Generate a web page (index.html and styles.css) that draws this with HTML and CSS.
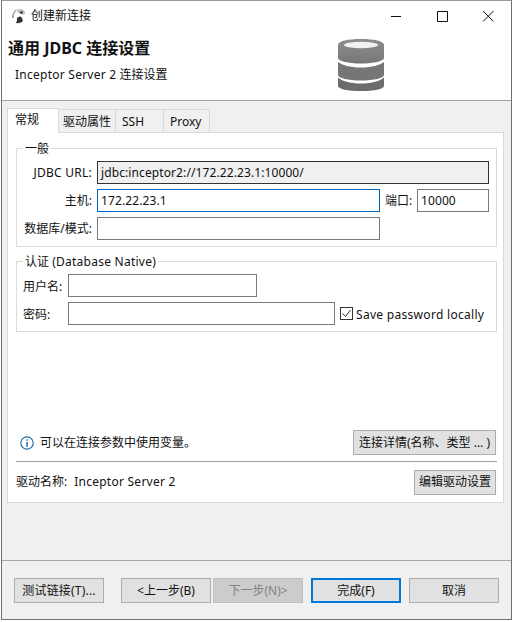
FILE: index.html
```html
<!DOCTYPE html>
<html lang="zh-CN">
<head>
  <meta charset="UTF-8" />
  <title>创建新连接</title>
  <link rel="stylesheet" href="styles.css">
</head>
<body>
  <div class="window">
    <!-- Title bar -->
    <div class="titlebar">
      <svg class="app-icon" viewBox="0 0 15 16">
        <path d="M1 10C1 6 3 3 6 1L5 3C3 5 2.500 7 2.500 10Z" fill="#888"/>
        <path d="M6 2C9 0 13 1 14 4C14.500 6 13 7 12 6.500C10 6 8 6 6 4Z" fill="#c4c4c4"/>
        <path d="M6 10C8 8 10 8 11 10L12 13C10 15 7 15.500 5 15C6 13.500 6 12 6 10Z" fill="#333"/>
        <circle cx="10.500" cy="4.500" r="1.300" fill="#333"/>
      </svg>
      <span class="title-text">创建新连接</span>
      <div class="win-controls">
        <svg class="win-btn" viewBox="0 0 46 20"><path d="M18 10.500H28" stroke="#111" fill="none"/></svg>
        <svg class="win-btn" viewBox="0 0 46 20"><path d="M18.500 5.500H28.500V15.500H18.500Z" stroke="#111" fill="none"/></svg>
        <svg class="win-btn" viewBox="0 0 46 20"><path d="M18 5L28.500 15.500M28.500 5L18 15.500" stroke="#111" fill="none"/></svg>
      </div>
    </div>

    <!-- Wizard header -->
    <div class="header">
      <div class="header-text">
        <h1>通用 JDBC 连接设置</h1>
        <p><span class="latin">Inceptor Server 2</span> 连接设置</p>
      </div>
      <svg class="db-icon" viewBox="0 0 46 52">
        <defs>
          <linearGradient id="dbGrad" x1="0" y1="0" x2="0" y2="1">
            <stop offset="0" stop-color="#8e8e8e"/>
            <stop offset="1" stop-color="#777"/>
          </linearGradient>
        </defs>
        <path fill="url(#dbGrad)" d="M0 6C0 2 10 0 23 0S46 2 46 6V19C46 22 36 24.500 23 24.500S0 22 0 19Z"/>
        <ellipse cx="23" cy="6" rx="17" ry="3.200" fill="#f2f2f2"/>
        <path fill="#767676" d="M0 23C4 26 12 28.500 23 28.500S42 26 46 23V36C46 39 36 41.500 23 41.500S0 39 0 36Z"/>
        <path fill="#6c6c6c" d="M0 38.500C4 42 12 44.500 23 44.500S42 42 46 38.500V47C46 50 36 52 23 52S0 50 0 47Z"/>
      </svg>
    </div>

    <!-- Tabs and form -->
    <div class="content">
      <div class="tabs">
        <div class="tab tab-active">常规</div>
        <div class="tab tab-driver">驱动属性</div>
        <div class="tab tab-ssh">SSH</div>
        <div class="tab tab-proxy">Proxy</div>
      </div>
      <div class="panel">
        <fieldset class="group group-general">
          <legend>一般</legend>
          <div class="general-grid">
            <label class="latin">JDBC URL:</label>
            <div class="field field-readonly field-wide">jdbc:inceptor2://172.22.23.1:10000/</div>
            <label>主机:</label>
            <div class="field field-focus">172.22.23.1</div>
            <label class="port-label">端口:</label>
            <div class="field">10000</div>
            <label>数据库/模式:</label>
            <div class="field"></div>
          </div>
        </fieldset>

        <fieldset class="group group-auth">
          <legend>认证 <span class="latin">(Database Native)</span></legend>
          <div class="auth-row">
            <label class="auth-label">用户名:</label>
            <div class="field field-user"></div>
          </div>
          <div class="auth-row">
            <label class="auth-label">密码:</label>
            <div class="field field-pass"></div>
            <span class="checkbox">
              <svg viewBox="0 0 11 11"><path d="M1.500 5.500L4.500 8.500L9.500 2" stroke="#333" fill="none"/></svg>
            </span>
            <span class="check-text latin">Save password locally</span>
          </div>
        </fieldset>

        <div class="info-row">
          <svg class="info-icon" viewBox="0 0 14 14">
            <circle cx="7" cy="7" r="6.200" fill="none" stroke="#1f6fae" stroke-width="1.200"/>
            <rect x="6.300" y="6" width="1.500" height="4.800" fill="#1f6fae"/>
            <rect x="6.300" y="3.300" width="1.500" height="1.500" fill="#1f6fae"/>
          </svg>
          <span class="info-text">可以在连接参数中使用变量。</span>
          <button class="btn btn-details">连接详情(名称、类型 ... )</button>
        </div>
        <div class="driver-row">
          <span class="driver-label">驱动名称:</span>
          <span class="driver-name latin">Inceptor Server 2</span>
          <button class="btn btn-driver">编辑驱动设置</button>
        </div>
      </div>
    </div>

    <!-- Bottom buttons -->
    <div class="footer">
      <button class="btn btn-main btn-test">测试链接(T)...</button>
      <button class="btn btn-main">&lt;上一步(B)</button>
      <button class="btn btn-main btn-disabled">下一步(N)&gt;</button>
      <button class="btn btn-main btn-default">完成(F)</button>
      <button class="btn btn-main">取消</button>
    </div>
  </div>
</body>
</html>
```
FILE: styles.css
```css
/* Basic Reset */
* {
  margin: 0;
  padding: 0;
  box-sizing: border-box;
}

body {
  font-family: "Noto Sans", "Noto Sans CJK SC", sans-serif;
  font-size: 12px;
  line-height: 16px;
  color: #111;
  background-color: #fff;
}

/* Latin runs sit a little wider than Noto Sans */
.latin {
  letter-spacing: 0.25px;
}

.window {
  width: 511px;
  height: 620px;
  margin-left: 1px;
  border: 1px solid #707070;
  border-top-color: #9a9a9a;
  background-color: #f0f0f0;
  display: flex;
  flex-direction: column;
}

/* Title bar */
.titlebar {
  height: 30px;
  background-color: #fff;
  display: flex;
  align-items: center;
  padding-left: 9px;
}

.app-icon {
  width: 15px;
  height: 16px;
}

.title-text {
  margin-left: 5px;
}

.win-controls {
  margin-left: auto;
  display: flex;
}

.win-btn {
  width: 46px;
  height: 20px;
}

/* Wizard header */
.header {
  height: 70px;
  background-color: #fff;
  border-bottom: 1px solid #a0a0a0;
  display: flex;
  padding-left: 6px;
}

.header h1 {
  font-size: 16px;
  line-height: 20px;
  font-weight: 700;
  margin-top: 7px;
}

.header p {
  margin-top: 9px;
  margin-left: 7px;
}

.db-icon {
  width: 46px;
  height: 52px;
  margin-left: auto;
  margin-right: 127px;
  margin-top: 8px;
}

/* Tabs */
.content {
  height: 460px;
  padding: 6px 7px 0 5px;
  border-bottom: 1px solid #a8a8a8;
}

.tabs {
  display: flex;
  height: 25px;
  align-items: flex-end;
}

.tab {
  height: 23px;
  line-height: 23px;
  border: 1px solid #d9d9d9;
  border-left: 0;
  border-bottom: 0;
  background-color: #f0f0f0;
}

.tab-active {
  width: 52px;
  height: 25px;
  line-height: 21px;
  background-color: #fff;
  border-left: 1px solid #d9d9d9;
  padding-left: 7px;
  position: relative;
  top: 1px;
}

.tab-driver { width: 57px; padding-left: 4px; }
.tab-ssh { width: 48px; padding-left: 6px; }
.tab-proxy { width: 46px; padding-left: 6px; }

.panel {
  width: 497px;
  height: 371px;
  background-color: #fff;
  border: 1px solid #d9d9d9;
  padding: 6px 6px 0 8px;
  display: flex;
  flex-direction: column;
}

/* Groups */
.group {
  border: 1px solid #dcdcdc;
  width: 481px;
}

.group legend {
  margin-left: 6px;
  padding: 2px 2px 0;
  line-height: 16px;
}

.group-general {
  padding: 4px 7px 6px 0;
}

.group-auth {
  margin-top: 5px;
  padding: 4px 0 6px 6px;
}

.group-auth legend {
  margin-left: 0;
}

.general-grid {
  display: grid;
  grid-template-columns: 75px 283px 27px 72px;
  grid-auto-rows: 23px;
  column-gap: 5px;
  row-gap: 5px;
  align-items: center;
}

.general-grid label {
  text-align: right;
  padding-top: 1px;
  white-space: nowrap;
}

.general-grid .port-label {
  text-align: left;
}

.field {
  height: 23px;
  line-height: 21px;
  padding-left: 3px;
  letter-spacing: 0.1px;
  background-color: #fff;
  border: 1px solid #7a7a7a;
}

.field-wide {
  grid-column: 2 / 5;
}

.field-readonly {
  background-color: #f0f0f0;
  border-color: #333;
}

.field-focus {
  border-color: #0067c0;
}

.auth-row {
  display: flex;
  align-items: center;
  height: 23px;
  margin-bottom: 5px;
}

.auth-row:last-child {
  margin-bottom: 0;
}

.auth-label {
  width: 45px;
  flex-shrink: 0;
  padding-top: 2px;
}

.field-user { width: 189px; }
.field-pass { width: 267px; }

.checkbox {
  width: 13px;
  height: 13px;
  margin-left: 5px;
  border: 1px solid #333;
  background-color: #fff;
  display: flex;
}

.check-text {
  margin-left: 3px;
  padding-top: 2px;
  letter-spacing: 0.3px;
}

/* Info and driver rows */
.info-row {
  margin-top: auto;
  height: 32px;
  display: flex;
  align-items: center;
  width: 481px;
  border-bottom: 1px solid #a0a0a0;
  padding-bottom: 6px;
}

.info-icon {
  width: 14px;
  height: 14px;
  margin-left: 4px;
}

.info-text {
  margin-left: 6px;
}

.driver-row {
  height: 40px;
  width: 481px;
  display: flex;
  align-items: center;
}

.driver-name {
  margin-left: 7px;
}

/* Buttons */
.btn {
  font: inherit;
  height: 25px;
  color: #111;
  background-color: #e1e1e1;
  border: 1px solid #adadad;
}

.btn-details {
  width: 143px;
  margin-left: auto;
  margin-right: 1px;
}

.btn-driver {
  width: 82px;
  margin-left: auto;
  margin-right: 1px;
}

.footer {
  flex: 1;
  display: flex;
  align-items: flex-start;
  padding: 17px 0 0 12px;
  column-gap: 2px;
}

.btn-main {
  width: 90px;
}

.btn-test {
  margin-right: 15px;
  letter-spacing: 0.2px;
}

.btn-disabled {
  background-color: #ccc;
  color: #838383;
  border-color: #bfbfbf;
}

.btn-default {
  margin-left: 6px;
  margin-right: 6px;
  border: 2px solid #0078d7;
}
```
